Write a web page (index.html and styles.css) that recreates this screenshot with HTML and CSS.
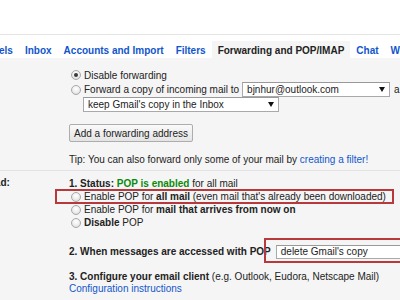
FILE: index.html
```html
<!DOCTYPE html>
<html>
<head>
<meta charset="utf-8">
<title>Settings</title>
<link rel="stylesheet" href="styles.css">
</head>
<body>
<div class="topbar"></div>
<nav class="tabs">
  <a class="tab">General</a>
  <a class="tab">Labels</a>
  <a class="tab">Inbox</a>
  <a class="tab">Accounts and Import</a>
  <a class="tab">Filters</a>
  <span class="tab active">Forwarding and POP/IMAP</span>
  <a class="tab">Chat</a>
  <a class="tab">Web Clips</a>
</nav>
<main class="settings">
  <section class="setting fwd">
    <div class="label">Forwarding:</div>
    <div class="value">
      <div class="row r1"><span class="radio checked"></span>Disable forwarding</div>
      <div class="row r2"><span class="radio"></span>Forward a copy of incoming mail to<span class="select s1">bjnhur@outlook.com</span>and</div>
      <div class="row r3"><span class="select s2">keep Gmail's copy in the Inbox</span></div>
      <button class="btn">Add a forwarding address</button>
      <p class="tip">Tip: You can also forward only some of your mail by <a class="link">creating a filter!</a></p>
    </div>
  </section>
  <section class="setting pop">
    <div class="label">POP Download:</div>
    <div class="value">
      <div class="row status"><b>1. Status:&nbsp;</b><b class="ok">POP is enabled</b>&nbsp;for all mail</div>
      <div class="row opt marked"><span class="radio"></span>Enable POP for&nbsp;<b>all mail</b>&nbsp;(even mail that's already been downloaded)<span class="mark m1"></span></div>
      <div class="row opt"><span class="radio"></span>Enable POP for&nbsp;<b>mail that arrives from now on</b></div>
      <div class="row opt"><span class="radio"></span><b>Disable</b>&nbsp;POP</div>
      <div class="row when marked"><b>2. When messages are accessed with POP</b><span class="select s3">delete Gmail's copy</span><span class="mark m2"></span></div>
      <div class="client"><b>3. Configure your email client</b> (e.g. Outlook, Eudora, Netscape Mail)</div>
      <div class="client"><a class="link">Configuration instructions</a></div>
    </div>
  </section>
</main>
</body>
</html>
```
FILE: styles.css
```css
html, body {
  margin: 0;
}
body {
  width: 400px;
  height: 300px;
  overflow: hidden;
  background: #f5f5f5;
  font-family: "Liberation Sans", Arial, sans-serif;
  font-size: 10px;
  color: #222;
}
.topbar {
  height: 34px;
  background: #fff;
  border-bottom: 1px solid #e5e5e5;
}
.tabs {
  display: flex;
  align-items: flex-end;
  height: 23px;
  margin-left: -74px;
  background: #fff;
  white-space: nowrap;
}
.tab {
  flex: none;
  height: 15px;
  padding: 2px 6px 0;
  line-height: 15px;
  font-weight: bold;
  color: #15c;
}
.tab.active {
  background: #f5f5f5;
  color: #222;
}
.settings {
  margin-left: -65px;
}
.setting {
  display: grid;
  grid-template-columns: 134px 1fr;
}
.label {
  font-weight: bold;
  line-height: 14px;
  white-space: nowrap;
}
.fwd {
  padding: 10px 0 3px;
}
.pop {
  border-top: 1px solid #e3e3e3;
  padding-top: 5px;
}
.row {
  display: flex;
  align-items: center;
  white-space: nowrap;
}
.r1 { height: 14px; }
.r2 { height: 15px; }
.r3 { height: 15px; padding-left: 14px; }
.radio {
  flex: none;
  position: relative;
  width: 10px;
  height: 10px;
  box-sizing: border-box;
  margin: 0 3px 0 2px;
  border: 1px solid #a8a8a8;
  border-radius: 50%;
  background: radial-gradient(circle at 50% 35%, #fff 0, #f2f2f2 40%, #d6d6d6 100%);
}
.radio.checked::after {
  content: "";
  position: absolute;
  left: 2px;
  top: 2px;
  width: 4px;
  height: 4px;
  border-radius: 50%;
  background: #3a3a3a;
}
.select {
  flex: none;
  display: inline-flex;
  align-items: center;
  justify-content: space-between;
  box-sizing: border-box;
  height: 15px;
  padding: 0 4px;
  border: 1px solid #a9a9a9;
  border-top-color: #999;
  background: #fff;
  color: #222;
}
.select::after {
  content: "";
  margin-left: 8px;
  border-left: 3px solid transparent;
  border-right: 3px solid transparent;
  border-top: 5px solid #111;
}
.s1 { width: 148px; margin: 0 4px 0 3px; }
.s2 { width: 196px; }
.s3 { width: 150px; height: 14px; margin-left: 5px; }
.btn {
  display: block;
  box-sizing: border-box;
  height: 18px;
  margin-top: 12px;
  padding: 0 4px;
  border: 1px solid #adadad;
  border-radius: 2px;
  background: linear-gradient(#fafafa, #e4e4e4);
  font: inherit;
  color: #222;
}
.tip {
  margin: 11px 0 0;
  line-height: 14px;
  white-space: nowrap;
}
.link {
  color: #15c;
}
.status { height: 14px; }
.ok { color: #0a8a0a; }
.opt { height: 13px; }
.marked { position: relative; }
.mark {
  position: absolute;
  box-sizing: border-box;
  border: 2px solid #b8393b;
}
.m1 { left: -14px; top: -1px; width: 339px; height: 15px; }
.m2 { left: 195px; top: -6px; width: 200px; height: 25px; }
.when { height: 15px; margin-top: 15px; }
.client { line-height: 12px; white-space: nowrap; }
.when + .client { margin-top: 12px; }
```
